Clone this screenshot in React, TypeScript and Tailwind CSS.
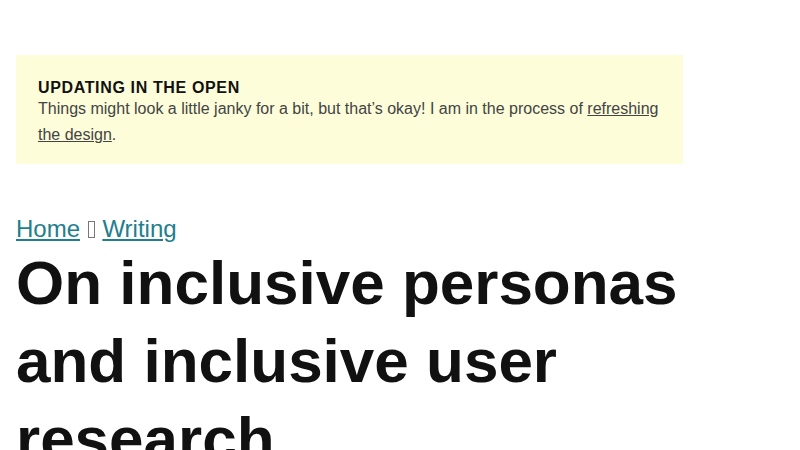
export default function App() {
  return (
    <div className="min-h-screen bg-white px-4 pt-[55px] font-['Liberation_Sans',Arial,sans-serif]">
      <div className="max-w-[667px]">
        <aside className="bg-[#fdfdda] px-[22px] pb-[16px] pt-[25px]">
          <p className="text-base font-bold uppercase leading-[16px] tracking-[0.04em] text-[#111]">
            Updating in the open
          </p>
          <p className="text-base leading-[26px] text-[#444]">
            Things might look a little janky for a bit, but that’s okay! I am in the process of{' '}
            <a href="#" className="underline">
              refreshing the design
            </a>
            .
          </p>
        </aside>

        <nav className="mt-[49px] text-2xl leading-[32px] text-[#666]">
          <a href="#" className="text-[#217e8c] underline">
            Home
          </a>{' '}
          <span
            aria-hidden
            className="mx-[1px] inline-block h-[17px] w-[7px] border border-[#777] align-[-1px]"
          />{' '}
          <a href="#" className="text-[#217e8c] underline">
            Writing
          </a>
        </nav>

        <h1 className="-mt-[1px] text-[62px] font-bold leading-[78px] text-[#111]">
          On inclusive personas and inclusive user research
        </h1>
      </div>
    </div>
  );
}
